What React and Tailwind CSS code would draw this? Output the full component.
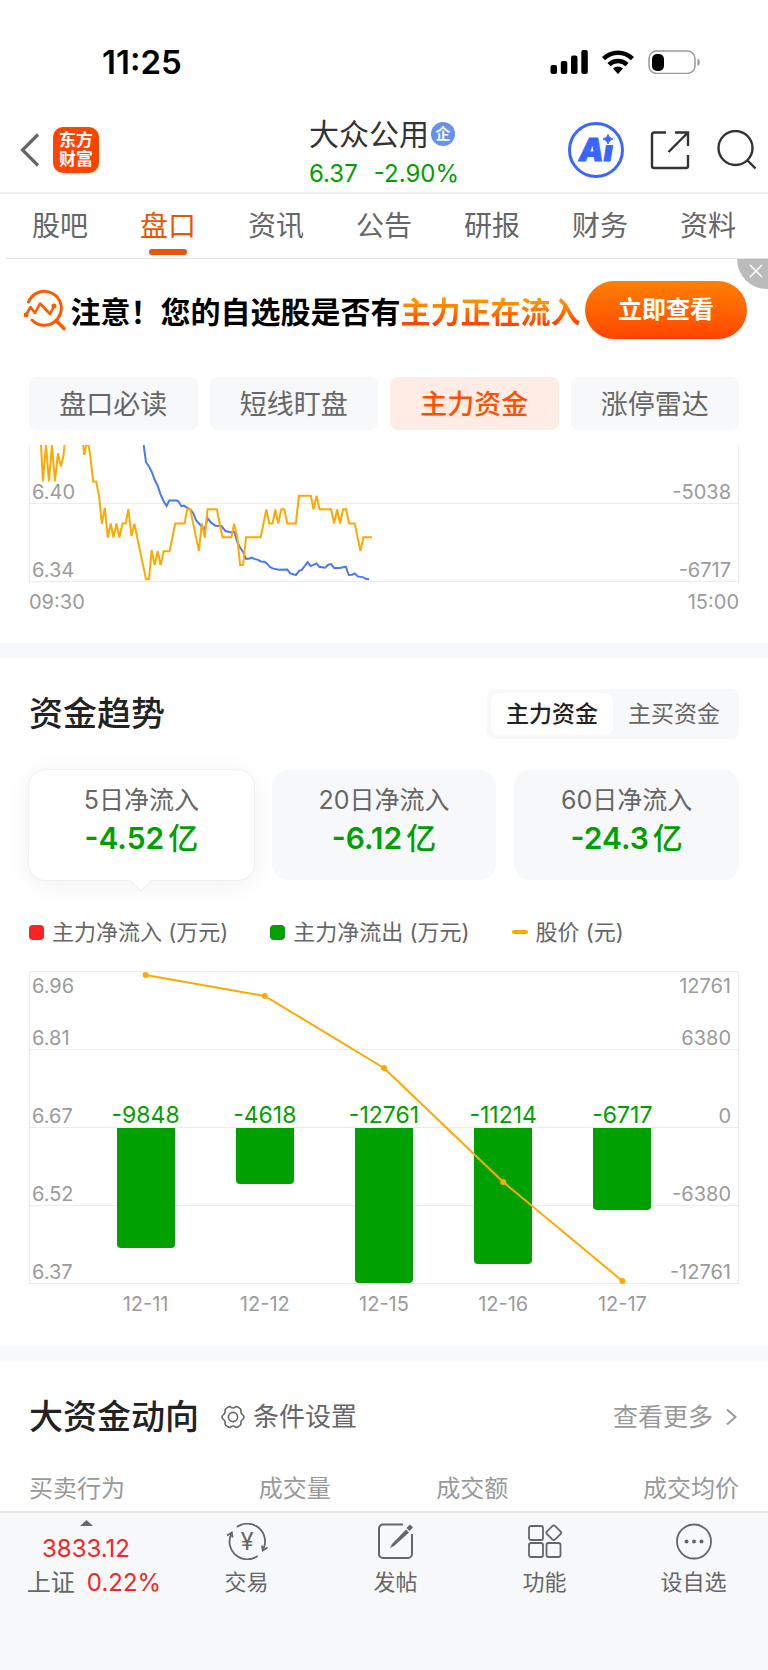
import React, { useState } from 'react';
import clsx from 'clsx';

const TABS = ['股吧', '盘口', '资讯', '公告', '研报', '财务', '资料'];
const PILLS = ['盘口必读', '短线盯盘', '主力资金', '涨停雷达'];
const FLOW_TYPES = ['主力资金', '主买资金'];

const PERIODS = [
  { label: '5日净流入', value: '-4.52' },
  { label: '20日净流入', value: '-6.12' },
  { label: '60日净流入', value: '-24.3' },
];

const MAX_FLOW = 12761;

// y is the price point, in pixels from the top of the plot
const DAYS = [
  { date: '12-11', flow: -9848, x: '10%', y: 3 },
  { date: '12-12', flow: -4618, x: '30%', y: 24 },
  { date: '12-15', flow: -12761, x: '50%', y: 96 },
  { date: '12-16', flow: -11214, x: '70%', y: 210 },
  { date: '12-17', flow: -6717, x: '90%', y: 309 },
];

const ROWS = [
  ['6.81', '6380'],
  ['6.67', '0'],
  ['6.52', '-6380'],
  ['6.37', '-12761'],
];

const PRICE_START = '33,0 39,110 48,0 57,110 66,0 75,110 84,25 93,65 101,30 104,0';
const PRICE_LINE =
  '160,0 163,30 169,0 176,0 181,30 190,110 199,110 208,155 216,238 225,190 234,280 243,237 251,280 260,237 269,280 278,237 288,237 296,193 305,275 314,238 349,406 358,406 366,317 375,363 384,321 393,363 402,321 420,321 437,237 465,237 473,194 482,194 508,320 517,237 526,280 534,194 562,194 579,279 606,279 614,238 624,280 632,363 641,363 650,279 694,279 711,195 720,237 730,237 738,195 747,237 756,194 765,194 774,237 800,237 809,153 845,153 853,195 862,153 871,194 906,194 915,237 924,195 933,237 942,194 951,194 960,237 977,237 994,320 1003,279 1029,279';
const FLOW_LINE =
  '342,0 349,52 358,65 367,83 375,105 384,123 393,150 402,170 411,184 419,168 443,168 447,171 455,185 463,183 473,190 482,194 491,206 500,228 517,247 526,255 534,221 544,234 558,244 576,245 588,260 603,264 615,263 624,295 632,310 641,323 650,344 661,343 667,340 677,345 686,347 695,352 705,353 713,358 721,368 730,373 748,377 774,376 783,388 800,393 809,381 818,377 835,354 844,366 862,358 870,368 888,371 897,362 906,360 915,372 933,372 950,368 959,393 969,392 977,388 986,397 1003,400 1012,405 1020,406';

const StatusBar = () => (
  <div className="flex items-center justify-between pt-[46px] pb-[30px] pl-[102px] pr-[67px]">
    <span className="text-[33px] leading-8 font-semibold text-black">11:25</span>
    <div className="flex items-center gap-3.5">
      <svg width="38" height="24" viewBox="0 0 38 24" fill="#000">
        <rect x="0.500" y="15" width="6.500" height="9" rx="2" />
        <rect x="10.800" y="11" width="6.500" height="13" rx="2" />
        <rect x="21" y="5.500" width="6.500" height="18.500" rx="2" />
        <rect x="31.300" y="0" width="6.500" height="24" rx="2" />
      </svg>
      <svg width="32" height="24" viewBox="0 0 32 24" fill="none" stroke="#000" strokeWidth="4.500">
        <path d="M1.600 8.600a20.500 20.500 0 0 1 28.800 0" />
        <path d="M7 14.600a12.800 12.800 0 0 1 18 0" />
        <path d="M11 18.600a7.200 7.200 0 0 1 10 0L16 24z" fill="#000" stroke="none" />
      </svg>
      <svg width="53" height="24" viewBox="0 0 53 24" fill="none">
        <rect x="1" y="1" width="46" height="22.500" rx="7.500" stroke="#999" strokeWidth="1.500" />
        <rect x="4" y="4" width="12" height="17" rx="5" fill="#000" />
        <path d="M49.500 8.500c3 1 3 6.500 0 7.500z" fill="#999" />
      </svg>
    </div>
  </div>
);

const Header = () => (
  <header className="grid h-[86px] grid-cols-[1fr_auto_1fr] items-center border-b-2 border-[#eeeeee] px-3">
    <div className="flex items-center gap-[13px] pl-2">
      <button aria-label="返回">
        <svg width="20" height="34" viewBox="0 0 20 34" fill="none" stroke="#666" strokeWidth="3.200">
          <path d="M18 1.500 2.500 17 18 32.500" />
        </svg>
      </button>
      <a href="#home" className="flex h-[46px] w-[46px] flex-col items-center justify-center rounded-[10px] bg-[#ff4400] text-[17px] leading-[19px] font-bold text-white">
        <span>东方</span>
        <span>财富</span>
      </a>
    </div>
    <div className="flex flex-col gap-0.5 pt-1.5">
      <h1 className="flex items-center gap-0.5 text-[30px] leading-10 text-[#333333]">
        大众公用
        <span className="flex h-6 w-6 items-center justify-center rounded-full bg-[#6492ee] text-[15px] font-bold text-white">企</span>
      </h1>
      <div className="flex gap-4 text-2xl leading-9 text-[#00a000]">
        <span>6.37</span>
        <span>-2.90%</span>
      </div>
    </div>
    <div className="flex items-center justify-end gap-[26px]">
      <button aria-label="Ai" className="relative flex h-14 w-14 items-center justify-center rounded-full border-[3px] border-[#3a66ff] text-[31px] leading-8 font-black text-[#3a66ff] [-webkit-text-stroke:1px_#3a66ff]">
        <span className="italic">Ai</span>
        <svg className="absolute top-2 right-[7px]" width="12" height="12" viewBox="0 0 12 12">
          <rect width="12" height="12" fill="#fff" />
          <path d="M6 1.500Q6.800 5.200 11 6Q6.800 6.800 6 11Q5.200 6.800 1 6Q5.200 5.200 6 1.500z" fill="#3a66ff" stroke="#3a66ff" />
        </svg>
      </button>
      <button aria-label="分享">
        <svg width="40" height="40" viewBox="0 0 40 40" fill="none" stroke="#333" strokeWidth="2.400">
          <path d="M16 2.500H4a2 2 0 0 0-2 2V36a2 2 0 0 0 2 2h32a2 2 0 0 0 2-2V25" />
          <path d="M25 2.500h13V16M38 2.500 18.500 22" />
        </svg>
      </button>
      <button aria-label="搜索">
        <svg width="40" height="40" viewBox="0 0 40 40" fill="none" stroke="#333" strokeWidth="2.400">
          <circle cx="19.500" cy="18" r="17" />
          <path d="M31.500 30.500 39.500 38.500" />
        </svg>
      </button>
    </div>
  </header>
);

const Banner = () => (
  <div className="relative flex items-center justify-between pt-[22px] pb-[38px] pl-6 pr-[21px]">
    <svg className="shrink-0" width="42" height="42" viewBox="0 0 42 42" fill="none" stroke="#ff5a00" strokeWidth="3" strokeLinecap="round">
      <path d="M4.500 13A17 17 0 1 1 8 31" />
      <path d="M32 31.500 40 39.500" strokeWidth="3.600" />
      <path d="M2 26 6.500 18 11 24 16 14.500 26 25 30 17" strokeWidth="2.600" strokeLinejoin="round" />
      <circle cx="2" cy="26" r="1" />
      <circle cx="30" cy="17" r="1" />
    </svg>
    <p className="pt-1 text-[30px] leading-10 font-bold whitespace-nowrap text-black">
      注意！您的自选股是否有
      <span className="bg-linear-to-b from-[#ff9500] from-20% to-[#ff4400] to-80% bg-clip-text text-transparent">主力正在流入</span>
    </p>
    <button className="h-[58px] w-[162px] shrink-0 rounded-full bg-linear-to-b from-[#ff7e00] to-[#ff4400] text-2xl font-bold text-white">立即查看</button>
    <button aria-label="关闭" className="absolute top-0 right-0 flex h-[30px] w-[31px] items-center justify-center rounded-bl-full bg-[#bbbbbb] pl-1.5 pb-1.5">
      <svg width="14" height="14" viewBox="0 0 14 14" stroke="#fff" strokeWidth="1.500">
        <path d="M1 1 13 13M13 1 1 13" />
      </svg>
    </button>
  </div>
);

const IntradayChart = () => (
  <div>
    <div className="relative flex h-[137px] flex-col border-x border-b border-[#ebebeb] text-xl leading-[22px] text-[#9b9b9b]">
      <svg className="absolute inset-0 h-full w-full" viewBox="0 0 2130 411" preserveAspectRatio="none" fill="none" strokeWidth="2">
        <polyline points={FLOW_LINE} stroke="#4a78f5" vectorEffect="non-scaling-stroke" />
        <polyline points={PRICE_START} stroke="#ffa800" vectorEffect="non-scaling-stroke" />
        <polyline points={PRICE_LINE} stroke="#ffa800" vectorEffect="non-scaling-stroke" />
      </svg>
      <div className="flex h-[59px] items-end justify-between border-b border-[#ebebeb] pl-0.5 pr-[7px]">
        <span>6.40</span>
        <span>-5038</span>
      </div>
      <div className="flex flex-1 items-end justify-between pl-0.5 pr-[7px]">
        <span>6.34</span>
        <span>-6717</span>
      </div>
    </div>
    <div className="mt-2 flex justify-between text-xl leading-6 text-[#9b9b9b]">
      <span>09:30</span>
      <span>15:00</span>
    </div>
  </div>
);

const TrendChart = () => (
  <div>
    <div className="relative border-x border-t border-[#ebebeb] text-xl leading-[22px] text-[#9b9b9b]">
      <div className="absolute inset-x-0 top-0 flex justify-between pt-[3px] pl-0.5 pr-[7px]">
        <span>6.96</span>
        <span>12761</span>
      </div>
      {ROWS.map(([price, flow]) => (
        <div key={price} className="flex h-[78px] items-end justify-between border-b border-[#ebebeb] pl-0.5 pr-[7px]">
          <span>{price}</span>
          <span>{flow}</span>
        </div>
      ))}
      <div className="absolute inset-x-14 top-0 bottom-0">
        <div className="grid h-full grid-cols-5">
          {DAYS.map((d) => (
            <div key={d.date} className="flex flex-col items-center">
              <div className="flex h-1/2 items-end text-[23px] leading-[26px] text-[#00a000]">{d.flow}</div>
              <div className="w-[58px] rounded-b-[4px] bg-[#00a000]" style={{ height: Math.round((-d.flow / MAX_FLOW) * 155) }} />
            </div>
          ))}
        </div>
        <svg className="absolute inset-0 h-full w-full overflow-visible">
          {DAYS.slice(1).map((d, i) => (
            <line key={d.date} x1={DAYS[i].x} y1={DAYS[i].y} x2={d.x} y2={d.y} stroke="#ffa800" strokeWidth="2" />
          ))}
          {DAYS.map((d) => (
            <circle key={d.date} cx={d.x} cy={d.y} r="3" fill="#ffa800" />
          ))}
        </svg>
      </div>
    </div>
    <div className="mx-[57px] mt-2 grid grid-cols-5 text-center text-xl leading-6 text-[#9b9b9b]">
      {DAYS.map((d) => <span key={d.date}>{d.date}</span>)}
    </div>
  </div>
);

const FundTrend = () => {
  const [type, setType] = useState(FLOW_TYPES[0]);
  const [period, setPeriod] = useState(0);

  return (
    <section className="px-[29px] pt-[31px] pb-[30px]">
      <div className="flex items-center justify-between">
        <h2 className="text-[34px] leading-10 font-medium text-[#222222]">资金趋势</h2>
        <div className="flex h-[50px] rounded-lg bg-[#f7f8fa] p-1">
          {FLOW_TYPES.map((t) => (
            <button
              key={t}
              onClick={() => setType(t)}
              className={clsx('w-[122px] rounded-lg text-[23px]', t === type ? 'bg-white font-medium text-[#222222]' : 'text-[#666666]')}
            >
              {t}
            </button>
          ))}
        </div>
      </div>

      <div className="mt-[31px] grid grid-cols-3 gap-[18px]">
        {PERIODS.map((p, i) => (
          <button
            key={p.label}
            onClick={() => setPeriod(i)}
            className={clsx(
              'relative flex h-[110px] flex-col items-center rounded-2xl pt-3.5',
              i === period ? 'bg-white shadow-[0_0_2px_rgba(0,0,0,0.12),0_4px_28px_rgba(0,0,0,0.06)]' : 'bg-[#f7f8fa]'
            )}
          >
            <span className="text-[25px] leading-8 text-[#666666]">{p.label}</span>
            <span className="text-[30px] leading-[44px] font-semibold text-[#00a000]">
              {p.value}<span className="ml-1 font-medium">亿</span>
            </span>
            {i === period && (
              <svg className="absolute top-full left-1/2 -mt-px -translate-x-1/2" width="24" height="13" viewBox="0 0 24 13" fill="#fff">
                <path d="M0 0h24L12 12z" />
                <path d="M.500 1 12 12 23.500 1" fill="none" stroke="#ededed" />
              </svg>
            )}
          </button>
        ))}
      </div>

      <div className="mt-10 flex gap-[42px] text-[22px] leading-6 text-[#666666]">
        <span className="flex items-center gap-2">
          <i className="h-[15px] w-[15px] rounded-[4px] bg-[#f92323]" />主力净流入 (万元)
        </span>
        <span className="flex items-center gap-2">
          <i className="h-[15px] w-[15px] rounded-[4px] bg-[#00a000]" />主力净流出 (万元)
        </span>
        <span className="flex items-center gap-2">
          <i className="h-1 w-4 rounded-full bg-[#ffa800]" />股价 (元)
        </span>
      </div>

      <div className="mt-[27px]">
        <TrendChart />
      </div>
    </section>
  );
};

const BigMoney = () => (
  <section className="px-[29px] pt-9 pb-[5px]">
    <div className="flex items-center leading-10">
      <h2 className="text-[34px] font-medium text-[#222222]">大资金动向</h2>
      <button className="ml-[22px] flex items-center gap-2 text-[26px] text-[#666666]">
        <svg width="24" height="24" viewBox="0 0 24 24" fill="none" stroke="#666" strokeWidth="1.600" strokeLinejoin="round">
          <path d="M7 2.200Q8.500 1 9.800 2.200Q12 3.800 14.200 2.200Q15.500 1 17 2.200L19.400 3.900Q20.200 5 19.900 6.500Q19.800 8.800 21.600 9.600Q23 10.600 23 12Q23 13.400 21.600 14.400Q19.800 15.200 19.900 17.500Q20.200 19 19.400 20.100L17 21.800Q15.500 23 14.200 21.800Q12 20.200 9.800 21.800Q8.500 23 7 21.800L4.600 20.100Q3.800 19 4.100 17.500Q4.200 15.200 2.400 14.400Q1 13.400 1 12Q1 10.600 2.400 9.600Q4.200 8.800 4.100 6.500Q3.800 5 4.600 3.900z" />
          <circle cx="12" cy="12" r="4.600" />
        </svg>
        条件设置
      </button>
      <a href="#more" className="ml-auto flex items-center gap-3 text-[25px] leading-10 text-[#999999]">
        查看更多
        <svg width="14" height="18" viewBox="0 0 14 18" fill="none" stroke="#999" strokeWidth="2">
          <path d="M2 1.500 10.500 9 2 16.500" />
        </svg>
      </a>
    </div>
    <table className="mt-[35px] w-full table-fixed text-2xl leading-[34px] text-[#999999]">
      <thead>
        <tr>
          <th className="w-[25%] p-0 text-left font-normal">买卖行为</th>
          <th className="w-[17.5%] p-0 text-right font-normal">成交量</th>
          <th className="w-[25%] p-0 text-right font-normal">成交额</th>
          <th className="p-0 text-right font-normal">成交均价</th>
        </tr>
      </thead>
    </table>
  </section>
);

const TradeIcon = () => (
  <svg width="42" height="37" viewBox="0 0 42 37" fill="none" stroke="#666" strokeWidth="1.800">
    <path d="M10.900 4A17.800 17.800 0 0 1 37.400 26" />
    <path d="M41.500 24.500 36.800 27.500 36 22.500" />
    <path d="M31.700 33A17.800 17.800 0 0 1 5.200 11" />
    <path d="M1 12.500 5.800 9.500 6.600 14.500" />
    <text x="21.200" y="27" textAnchor="middle" fontSize="24" fill="#666" stroke="none">¥</text>
  </svg>
);

const PostIcon = () => (
  <svg width="36" height="37" viewBox="0 0 36 37" fill="none" stroke="#666" strokeWidth="2">
    <path d="M25 1.500H5a4 4 0 0 0-4 4V31a4 4 0 0 0 4 4h25a4 4 0 0 0 4-4V11" />
    <path d="M28 6.500 31 9.500 16 23 12 25 14 21z" fill="#666" stroke="none" />
    <path d="M30 6.500 33.500 3" strokeWidth="4.500" />
  </svg>
);

const AppsIcon = () => (
  <svg width="36" height="37" viewBox="0 0 36 37" fill="none" stroke="#666" strokeWidth="1.800">
    <rect x="2" y="3" width="14" height="14" rx="2" />
    <rect x="2" y="20" width="14" height="14" rx="2" />
    <rect x="19.500" y="20" width="14" height="14" rx="2" />
    <rect x="21" y="4" width="11.500" height="11.500" rx="2" transform="rotate(45 26.750 9.750)" />
  </svg>
);

const MoreIcon = () => (
  <svg width="36" height="37" viewBox="0 0 36 37" fill="#666">
    <circle cx="18" cy="18.500" r="17" fill="none" stroke="#666" strokeWidth="1.800" />
    <circle cx="10.500" cy="18.500" r="2" />
    <circle cx="18" cy="18.500" r="2" />
    <circle cx="25.500" cy="18.500" r="2" />
  </svg>
);

const NAV = [
  { label: '交易', Icon: TradeIcon },
  { label: '发帖', Icon: PostIcon },
  { label: '功能', Icon: AppsIcon },
  { label: '设自选', Icon: MoreIcon },
];

const BottomNav = () => (
  <nav className="flex border-t-2 border-[#e4e5e7] bg-[#f7f8fa] pb-[72px] text-[#666666]">
    <a href="#index" className="flex w-43 flex-col items-center pt-[7px] text-2xl leading-8 text-[#f92323]">
      <svg width="13" height="6" viewBox="0 0 13 6" fill="#666">
        <path d="M6.500 0 13 6H0z" />
      </svg>
      <span className="mt-[7px]">3833.12</span>
      <span className="mt-0.5 flex gap-3 pl-4"><span className="text-[#666666]">上证</span>0.22%</span>
    </a>
    {NAV.map(({ label, Icon }) => (
      <a key={label} href="#nav" className="flex flex-1 flex-col items-center pt-2.5 text-[22px] leading-6">
        <Icon />
        <span className="mt-2.5">{label}</span>
      </a>
    ))}
  </nav>
);

const App = () => {
  const [tab, setTab] = useState('盘口');
  const [pill, setPill] = useState('主力资金');

  return (
    <div className="min-h-screen bg-white font-['Inter','Noto_Sans_CJK_SC',sans-serif]">
      <StatusBar />
      <Header />

      <nav className="ml-1.5 flex border-b border-[#e3e3e3] pr-1.5">
        {TABS.map((name) => (
          <button
            key={name}
            onClick={() => setTab(name)}
            className={clsx('relative h-16 flex-1 text-[28px]', name === tab ? 'text-[#ea5504]' : 'text-[#666666]')}
          >
            {name}
            {name === tab && <span className="absolute bottom-[3px] left-1/2 h-1.5 w-[38px] -translate-x-1/2 rounded-full bg-[#ea5504]" />}
          </button>
        ))}
      </nav>

      <Banner />

      <section className="px-[29px] pb-[29px]">
        <div className="mb-[15px] grid grid-cols-4 gap-3">
          {PILLS.map((name) => (
            <button
              key={name}
              onClick={() => setPill(name)}
              className={clsx(
                'h-[53px] rounded-lg pt-1 text-[27px]',
                name === pill ? 'bg-[#ffede5] font-medium text-[#ff5000]' : 'bg-[#f7f8fa] text-[#666666]'
              )}
            >
              {name}
            </button>
          ))}
        </div>
        <IntradayChart />
      </section>

      <div className="h-[15px] bg-[#f7f8fa]" />
      <FundTrend />
      <div className="h-[15px] bg-[#f7f8fa]" />
      <BigMoney />
      <BottomNav />
    </div>
  );
};

export default App;
